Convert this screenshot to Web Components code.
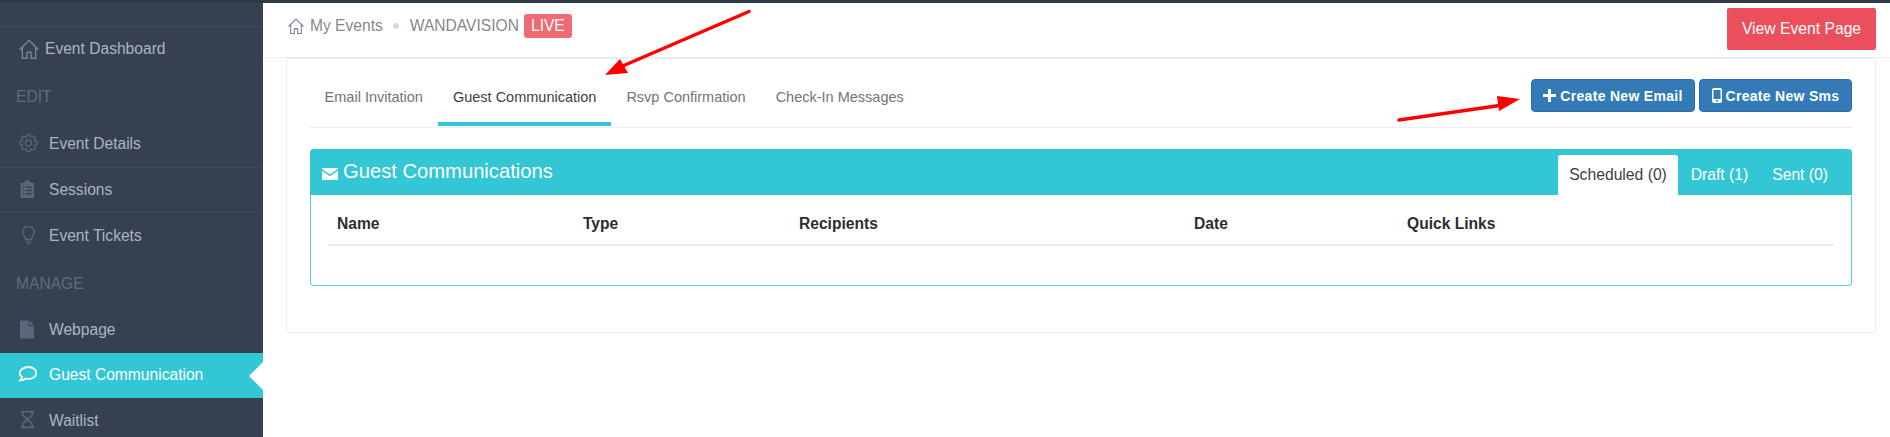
<!DOCTYPE html>
<html lang="en">
<head>
<meta charset="utf-8">
<title>Guest Communication</title>
<style>
html,body{margin:0;height:437px;overflow:hidden;background:#fff;font-family:"Liberation Sans",Arial,sans-serif}
</style>
</head>
<body>
<app-shell>
  <side-nav slot="side">
    <nav-item icon="home" offset="tight" style="height:45px;padding-bottom:2px">Event Dashboard</nav-item>
    <nav-label style="padding-top:15px">EDIT</nav-label>
    <nav-item icon="gear" line style="height:48px">Event Details</nav-item>
    <nav-item icon="clip" line style="height:45px">Sessions</nav-item>
    <nav-item icon="bulb" style="height:45px">Event Tickets</nav-item>
    <nav-label style="padding-top:16px">MANAGE</nav-label>
    <nav-item icon="file" style="height:47px">Webpage</nav-item>
    <nav-item icon="chat" active style="height:45px;padding-bottom:2px">Guest Communication</nav-item>
    <nav-item icon="glass" style="height:46px">Waitlist</nav-item>
  </side-nav>
  <top-bar slot="top"></top-bar>
  <event-card slot="main">
    <sub-tabs></sub-tabs>
    <comm-panel></comm-panel>
  </event-card>
</app-shell>
<script>
function gearPath(){
  const cx=9.5,cy=9,pts=[];
  const n=8;
  for(let i=0;i<n;i++){
    const a=i*2*Math.PI/n-Math.PI/2;
    [[-.30,6.6],[-.17,8.6],[.17,8.6],[.30,6.6]].forEach(([d,r])=>{
      pts.push((cx+r*Math.cos(a+d)).toFixed(2)+' '+(cy+r*Math.sin(a+d)).toFixed(2));
    });
  }
  return 'M'+pts.join('L')+'z';
}
const ICONS={
 home:'<svg viewBox="0 0 18 18" width="20" height="20" fill="none" stroke="currentColor" stroke-width="1.300"><path d="M.6 9.600 9 1.200l8.400 8.400M3 7.500V17.400h4.200v-5.400h3.600v5.400H15V7.500"/></svg>',
 gear:'<svg viewBox="0 0 20 20" width="20" height="20" fill="none" stroke="currentColor" stroke-width="1.2"><circle cx="9.500" cy="9" r="3.100"/><path d="'+gearPath()+'"/></svg>',
 clip:'<svg viewBox="0 0 20 20" width="20" height="20"><path fill="currentColor" fill-rule="evenodd" d="M1.600 3h3.600V1.600L8.300 0l3.100 1.600V3H15v14a1 1 0 0 1-1 1H2.600a1 1 0 0 1-1-1zM4 6.500V8h1.500V6.500zm3 0V8h5.600V6.500zm-3 3.300v1.500h1.500V9.800zm3 0v1.500h5.600V9.800zm-3 3.300v1.500h1.500v-1.500zm3 0v1.500h5.600v-1.500z"/></svg>',
 bulb:'<svg viewBox="0 0 20 20" width="20" height="20" fill="none" stroke="currentColor" stroke-width="1.300"><path d="M6.500 13.500C6.500 11 3.700 9.500 3.700 6a5.800 5.800 0 0 1 11.600 0c0 3.500-2.800 5-2.800 7.500zM6.800 15.800h5.400M8 17.800h3"/></svg>',
 file:'<svg viewBox="0 0 20 20" width="20" height="20"><path fill="currentColor" d="M1 .5h8.500v5.500H15v12.500H1zM10.500 .5 15 5h-4.500z"/></svg>',
 chat:'<svg viewBox="0 0 20 20" width="20" height="20" fill="none" stroke="#fff" stroke-width="1.800"><path d="M10.500 2c4.400 0 7.700 2.600 7.700 5.900s-3.300 5.900-7.700 5.900c-.9 0-1.700-.1-2.500-.3-1.500 1.200-3.300 1.700-5.800 1.800 1-.9 1.700-2 1.900-3.300-1.500-1.100-2.400-2.600-2.400-4.100C1.700 4.600 6 2 10.500 2z"/></svg>',
 glass:'<svg viewBox="0 0 20 20" width="20" height="20" fill="none" stroke="currentColor" stroke-width="1.600"><path d="M2 .8h13M2 16.400h13M3.700 .8v2.500c0 3 4.800 4 4.800 5.300S3.700 11 3.700 14v2.400M13.300 .8v2.500c0 3-4.800 4-4.800 5.300s4.800 2.400 4.800 5.400v2.400"/></svg>'
};
function def(name,html,init){
  customElements.define(name,class extends HTMLElement{
    constructor(){super();this.attachShadow({mode:'open'}).innerHTML=html;}
    connectedCallback(){if(init)init.call(this,this.shadowRoot);}
  });
}
def('app-shell',`<style>
:host{display:grid;grid-template-columns:263px 1fr;grid-template-rows:55px 1fr;height:434px;border-top:3px solid #2b3947;overflow:hidden;position:relative;font:14px/20px "Liberation Sans",Arial,sans-serif}
.s{grid-row:1/3;display:block;min-height:0;overflow:hidden}
.t{grid-column:2}
.m{grid-column:2;background:#fff;min-width:0}
.arrows{position:absolute;left:0;top:-3px;width:1890px;height:437px;pointer-events:none}
</style>
<div class="s"><slot name="side"></slot></div>
<div class="t"><slot name="top"></slot></div>
<div class="m"><slot name="main"></slot></div>
<svg class="arrows" viewBox="0 0 1890 437" aria-hidden="true">
 <g fill="#fe0000" stroke="none">
  <path d="M749 11.500 L618 68" stroke="#fe0000" stroke-width="3.500" stroke-linecap="round"/>
  <path d="M605 75 L620 59 L628 73z"/>
  <path d="M1399 120 L1503 105" stroke="#fe0000" stroke-width="3.500" stroke-linecap="round"/>
  <path d="M1520 99 L1497 96 L1499 111z"/>
 </g>
</svg>`);
def('side-nav',`<style>
:host{display:block;height:100%;background:#36404e;padding-top:23px;box-sizing:border-box}
.top{border-top:1px solid #3f4a58}
</style><div class="top"><slot></slot></div>`);
def('nav-label',`<style>
:host{display:block;height:48px;box-sizing:border-box;padding:14px 0 0 16px;font-size:15.6px;line-height:20px;color:#5f6c7f}
</style><slot></slot>`);
def('nav-item',`<style>
:host{display:flex;align-items:center;box-sizing:border-box;font-size:15.6px;color:#a8b4c8;position:relative}
:host([line]){border-bottom:1px solid #3f4a58}
.i{width:20px;height:20px;margin:0 0 0 19px;color:#5a677b;flex:none;display:block}
.t{margin-left:10px;white-space:nowrap}
:host([offset=tight]) .t{margin-left:6px}
:host([offset=tight]) .i{color:#76839a}
:host([active]){background:#33c6d4;color:#fff}
:host([active]) .i{color:#fff;margin-left:18px}
:host([active]) .t{margin-left:11px}
:host([active])::after{content:"";position:absolute;right:0;top:50%;margin-top:-14px;border:14px solid transparent;border-left:0;border-right-color:#fff}
svg{display:block}
</style><span class="i"></span><span class="t"><slot></slot></span>`,function(r){r.querySelector('.i').innerHTML=ICONS[this.getAttribute('icon')];});
def('top-bar',`<style>
:host{display:flex;align-items:flex-start;justify-content:space-between;height:55px;box-sizing:border-box;padding:5px 14px 0 25px;border-bottom:1px solid #ebeff3}
.crumb{display:flex;align-items:center;height:36px;font-size:15.6px;color:#87888c;white-space:nowrap}
.h{width:16px;height:16px;margin-right:6px;color:#7e8590;display:block}
.h svg{width:16px;height:16px;display:block}
.dot{width:6px;height:6px;border-radius:50%;background:#d9d9d9;margin:0 11px 0 10px}
.live{background:#ee6b75;color:#fff;border-radius:3px;padding:2px 7px;height:20px;line-height:20px;margin-left:5px;font-size:15.6px}
.view{width:149px;height:42px;box-sizing:border-box;background:#e9505c;color:#fff;border-radius:2px;display:flex;align-items:center;justify-content:center;font-size:15.7px}
</style>
<div class="crumb"><span class="h">${ICONS.home}</span>My Events<span class="dot"></span>WANDAVISION<span class="live">LIVE</span></div>
<div class="view">View Event Page</div>`);
def('event-card',`<style>
:host{display:block;margin:0 14px 0 23px;height:275px;box-sizing:border-box;border:1px solid #ebeff3;border-radius:3px;padding:0 23px 0 23px}
</style><slot></slot>`);
def('sub-tabs',`<style>
:host{display:flex;justify-content:space-between;height:69px;box-sizing:border-box;border-bottom:1px solid #ebeff3;margin-bottom:21px;font-size:14.5px}
.l{display:flex}
.tab{height:48px;margin-top:19px;padding:9px 15px 0;box-sizing:border-box;line-height:20px;color:#72747c;white-space:nowrap}
.tab:first-child{padding-left:14.6px}
.tab.on{color:#3a3f47;border-bottom:4px solid #33c6d4}
.r{display:flex;gap:4px;padding-top:20px;box-sizing:border-box}
.b{height:33px;box-sizing:border-box;background:#337ab7;border:1px solid #2e6da4;border-radius:4px;color:#fff;font-weight:700;font-size:14px;letter-spacing:.3px;display:flex;align-items:center;justify-content:center;white-space:nowrap}
.b svg{display:block;margin-right:4px}
.b1{width:164px}.b2{width:153px}
</style>
<div class="l"><span class="tab">Email Invitation</span><span class="tab on">Guest Communication</span><span class="tab">Rsvp Confirmation</span><span class="tab">Check-In Messages</span></div>
<div class="r">
 <span class="b b1"><svg width="13" height="13" viewBox="0 0 13 13"><path fill="#fff" d="M5 0h3v5h5v3H8v5H5V8H0V5h5z"/></svg>Create New Email</span>
 <span class="b b2"><svg width="10" height="15" viewBox="0 0 10 15"><path fill="#fff" fill-rule="evenodd" d="M2 0h6a2 2 0 0 1 2 2v11a2 2 0 0 1-2 2H2a2 2 0 0 1-2-2V2a2 2 0 0 1 2-2zm-.5 2v9h7V2zM5 11.800a1 1 0 1 0 0 2 1 1 0 0 0 0-2z"/></svg>Create New Sms</span>
</div>`);
def('comm-panel',`<style>
:host{display:block;height:137px;box-sizing:border-box;border:1px solid #54d0dc;border-top:0;border-radius:4px}
.head{display:flex;justify-content:space-between;height:46px;margin:0 -1px;background:#33c6d4;border-radius:4px 4px 0 0;color:#fff}
.title{display:flex;align-items:center;font-size:20.2px;padding-left:12px;height:43px;white-space:nowrap}
.title svg{display:block;margin:6px 5px 0 0}
.tabs{display:flex;align-items:flex-end;font-size:15.7px}
.tabs span{height:40px;line-height:20px;padding:10px 12px 0;box-sizing:border-box;white-space:nowrap}
.tabs span:last-child{padding-right:24px}
.tabs .on{background:#fff;color:#3a3f47;border-radius:3px 3px 0 0;width:120px;padding-left:11.500px;padding-right:0;margin-right:1px}
.tbl{margin:0 17px;height:51px;display:grid;grid-template-columns:246px 216px 395px 213px 1fr;padding:19px 0 0 9px;box-sizing:border-box;border-bottom:2px solid #e9edf1;font-size:15.6px;font-weight:700;color:#2d2d30}
</style>
<div class="head"><div class="title"><svg width="16" height="12" viewBox="0 0 16 12"><path fill="#fff" d="M1 0h14a1 1 0 0 1 1 1L8 6.500 0 1a1 1 0 0 1 1-1zM0 2.800l8 5.500 8-5.500V11a1 1 0 0 1-1 1H1a1 1 0 0 1-1-1z"/></svg>Guest Communications</div>
<div class="tabs"><span class="on">Scheduled (0)</span><span>Draft (1)</span><span>Sent (0)</span></div></div>
<div class="tbl"><span>Name</span><span>Type</span><span>Recipients</span><span>Date</span><span>Quick Links</span></div>`);
</script>
</body>
</html>
